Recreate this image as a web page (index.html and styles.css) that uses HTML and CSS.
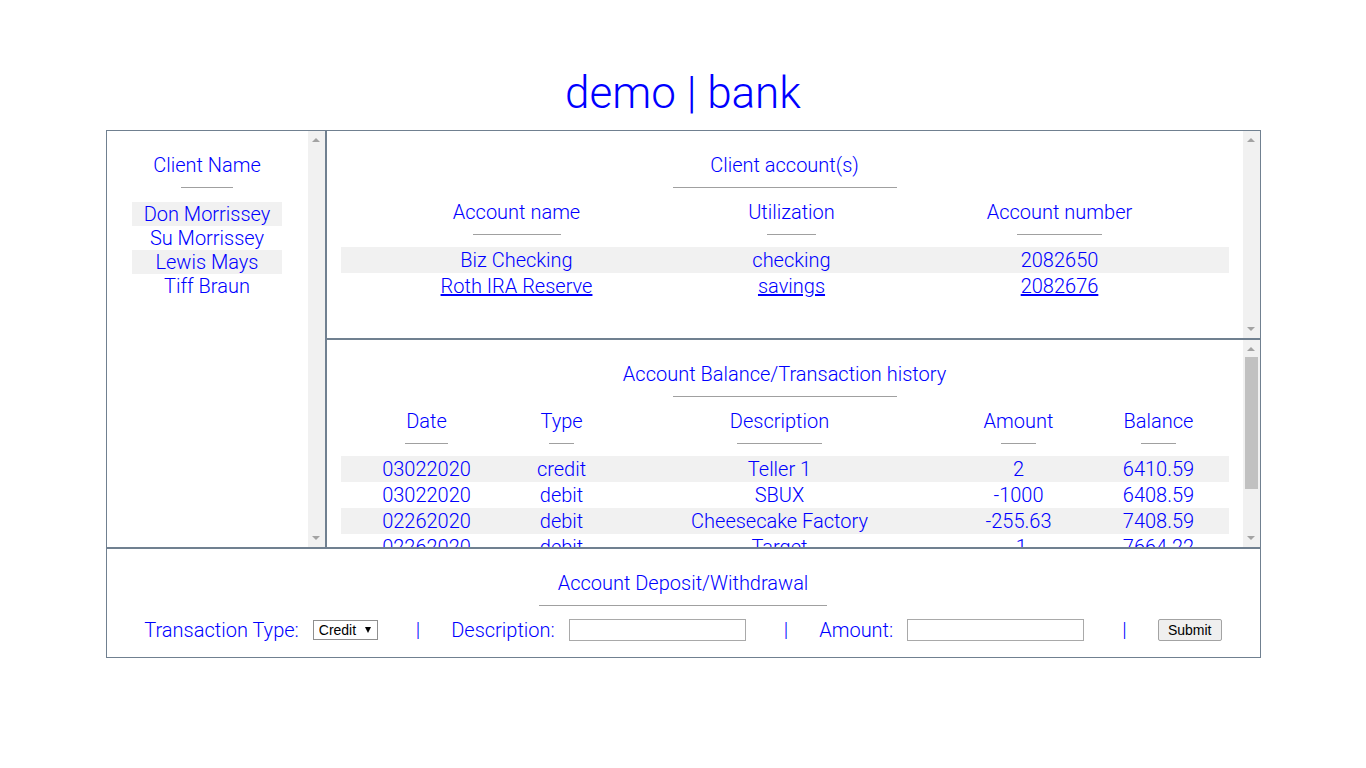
FILE: index.html
```html
<!DOCTYPE html>
<html lang="en">
<head>
<meta charset="utf-8">
<title>demo | bank</title>
<link rel="stylesheet" href="styles.css">
</head>
<body>
<h1 class="brand">demo | bank</h1>
<main class="board">
  <section class="panel clients">
    <div class="panel-body">
      <h2 class="panel-title">Client Name</h2>
      <div class="rule rule-clients"></div>
      <ul class="client-list">
        <li class="client">Don Morrissey</li>
        <li class="client">Su Morrissey</li>
        <li class="client">Lewis Mays</li>
        <li class="client">Tiff Braun</li>
      </ul>
    </div>
    <div class="rail" aria-hidden="true">
      <span class="rail-btn rail-up"></span>
      <span class="rail-fill"></span>
      <span class="rail-btn rail-down"></span>
    </div>
  </section>

  <section class="panel accounts">
    <div class="panel-body padded">
      <h2 class="panel-title">Client account(s)</h2>
      <div class="rule rule-wide"></div>
      <table class="grid">
        <colgroup>
          <col class="c-acc-name"><col class="c-acc-use"><col class="c-acc-num">
        </colgroup>
        <thead>
          <tr>
            <th>Account name<div class="rule rule-col"></div></th>
            <th>Utilization<div class="rule rule-col"></div></th>
            <th>Account number<div class="rule rule-col"></div></th>
          </tr>
        </thead>
        <tbody>
          <tr>
            <td>Biz Checking</td>
            <td>checking</td>
            <td>2082650</td>
          </tr>
          <tr>
            <td><a href="#" class="link">Roth IRA Reserve</a></td>
            <td><a href="#" class="link">savings</a></td>
            <td><a href="#" class="link">2082676</a></td>
          </tr>
        </tbody>
      </table>
    </div>
    <div class="rail" aria-hidden="true">
      <span class="rail-btn rail-up"></span>
      <span class="rail-fill"></span>
      <span class="rail-btn rail-down"></span>
    </div>
  </section>

  <section class="panel history">
    <div class="panel-body padded">
      <h2 class="panel-title">Account Balance/Transaction history</h2>
      <div class="rule rule-wide"></div>
      <table class="grid">
        <colgroup>
          <col class="c-date"><col class="c-type"><col class="c-desc"><col class="c-amt"><col class="c-bal">
        </colgroup>
        <thead>
          <tr>
            <th>Date<div class="rule rule-col"></div></th>
            <th>Type<div class="rule rule-col"></div></th>
            <th>Description<div class="rule rule-col"></div></th>
            <th>Amount<div class="rule rule-col"></div></th>
            <th>Balance<div class="rule rule-col"></div></th>
          </tr>
        </thead>
        <tbody>
          <tr><td>03022020</td><td>credit</td><td>Teller 1</td><td>2</td><td>6410.59</td></tr>
          <tr><td>03022020</td><td>debit</td><td>SBUX</td><td>-1000</td><td>6408.59</td></tr>
          <tr><td>02262020</td><td>debit</td><td>Cheesecake Factory</td><td>-255.63</td><td>7408.59</td></tr>
          <tr><td>02262020</td><td>debit</td><td>Target</td><td>-1</td><td>7664.22</td></tr>
          <tr><td>02252020</td><td>credit</td><td>Teller 2</td><td>5000</td><td>7665.22</td></tr>
          <tr><td>02202020</td><td>credit</td><td>Opening deposit</td><td>2665.22</td><td>2665.22</td></tr>
        </tbody>
      </table>
    </div>
    <div class="rail" aria-hidden="true">
      <span class="rail-btn rail-up"></span>
      <span class="rail-thumb"></span>
      <span class="rail-fill"></span>
      <span class="rail-btn rail-down"></span>
    </div>
  </section>

  <section class="panel transfer">
    <div class="panel-body">
      <h2 class="panel-title">Account Deposit/Withdrawal</h2>
      <div class="rule rule-form"></div>
      <form class="transfer-row">
        <label class="field-label" for="ttype">Transaction Type:</label>
        <span class="select-wrap">
          <select id="ttype" class="type-select">
            <option>Credit</option>
            <option>Debit</option>
          </select>
        </span>
        <span class="sep">|</span>
        <label class="field-label" for="tdesc">Description:</label>
        <input id="tdesc" class="text-input" type="text">
        <span class="sep">|</span>
        <label class="field-label" for="tamt">Amount:</label>
        <input id="tamt" class="text-input" type="text">
        <span class="sep">|</span>
        <button type="button" class="submit-btn">Submit</button>
      </form>
    </div>
  </section>
</main>
</body>
</html>
```

FILE: styles.css
```css
html, body {
  margin: 0;
  padding: 0;
  background: #ffffff;
}

body {
  font-family: "Roboto Light", Roboto, "Liberation Sans", Arial, sans-serif;
  font-weight: 300;
  color: #0000ff;
}

.brand {
  margin: 67px 0 11px;
  font-size: 44px;
  line-height: 52px;
  font-weight: 300;
  text-align: center;
  color: #0000ff;
}

.board {
  display: grid;
  grid-template-columns: 220px 935px;
  grid-template-rows: 209px 209px 110px;
  width: 1155px;
  margin: 0 auto;
}

.panel {
  box-sizing: border-box;
  border: 1px solid #708090;
  display: flex;
  min-height: 0;
  overflow: hidden;
  text-align: center;
  font-size: 20px;
  line-height: 24px;
}

.clients {
  grid-row: 1 / 3;
}

.transfer {
  grid-column: 1 / 3;
}

.panel-body {
  flex: 1;
  min-width: 0;
  overflow: hidden;
}

.padded {
  padding: 0 14px;
}

.panel-title {
  margin: 22px 0 0;
  font-size: 20px;
  line-height: 24px;
  font-weight: 300;
}

.rule {
  height: 1px;
  background: #a0a0a0;
  margin: 10px auto 0;
}

.rule-clients { width: 52px; }
.rule-wide { width: 224px; }
.rule-form { width: 25%; }
.rule-col { width: 25%; margin: 10px auto 12px; }

.client-list {
  list-style: none;
  margin: 14px auto 0;
  padding: 0;
  width: 150px;
}

.client {
  line-height: 24px;
}

.client:nth-child(odd) {
  background: #f1f1f1;
}

.grid {
  width: 100%;
  table-layout: fixed;
  border-collapse: collapse;
  border-spacing: 0;
}

.c-acc-name { width: 352px; }
.c-acc-use { width: 198px; }
.c-acc-num { width: 338px; }

.c-date { width: 172px; }
.c-type { width: 98px; }
.c-desc { width: 338px; }
.c-amt { width: 140px; }
.c-bal { width: 140px; }

.grid th {
  font-weight: 300;
  padding: 12px 0 0;
  line-height: 24px;
  text-align: center;
}

.grid td {
  padding: 0;
  line-height: 26px;
  text-align: center;
  white-space: nowrap;
}

.grid tbody tr:nth-child(odd) {
  background: #f1f1f1;
}

.link {
  color: #0000ff;
  text-decoration: underline;
}

/* scroll rail */
.rail {
  flex: none;
  width: 17px;
  display: flex;
  flex-direction: column;
  background: #f1f1f1;
}

.rail-btn {
  flex: none;
  height: 17px;
  display: flex;
  justify-content: center;
  align-items: center;
}

.rail-btn::before {
  content: "";
  width: 0;
  height: 0;
  border-left: 4px solid transparent;
  border-right: 4px solid transparent;
}

.rail-up::before {
  border-bottom: 4px solid #a3a3a3;
  margin-top: 1px;
}

.rail-down::before {
  border-top: 4px solid #a3a3a3;
  margin-bottom: 1px;
}

.rail-thumb {
  flex: none;
  height: 132px;
  margin: 0 2px;
  background: #c1c1c1;
}

.rail-fill {
  flex: 1;
}

/* form */
.transfer-row {
  display: flex;
  justify-content: center;
  align-items: center;
  height: 24px;
  margin: 12px 0 0;
}

.field-label {
  margin-right: 14px;
}

.sep {
  margin: 0 31px 0 38px;
}

.select-wrap {
  position: relative;
  display: inline-flex;
}

.type-select {
  appearance: none;
  -webkit-appearance: none;
  box-sizing: border-box;
  width: 65px;
  height: 20px;
  margin: 0;
  padding: 0 0 0 5px;
  border: 1px solid #8f8f8f;
  border-radius: 0;
  background: #ffffff;
  color: #000000;
  font-family: "Liberation Sans", Arial, sans-serif;
  font-size: 14px;
  font-weight: 400;
}

.select-wrap::after {
  content: "";
  position: absolute;
  right: 7px;
  top: 7px;
  width: 0;
  height: 0;
  border-left: 3.5px solid transparent;
  border-right: 3.5px solid transparent;
  border-top: 6px solid #000000;
  pointer-events: none;
}

.text-input {
  box-sizing: border-box;
  width: 177px;
  height: 22px;
  margin: 0;
  padding: 0 3px;
  border: 1px solid #a9a9a9;
  border-radius: 0;
  background: #ffffff;
  font-family: "Liberation Sans", Arial, sans-serif;
  font-size: 14px;
}

.submit-btn {
  box-sizing: border-box;
  width: 64px;
  height: 22px;
  margin: 0;
  padding: 0;
  border: 1px solid #a3a3a3;
  border-radius: 2px;
  background: #efefef;
  color: #000000;
  font-family: "Liberation Sans", Arial, sans-serif;
  font-size: 14px;
  font-weight: 400;
}
```
